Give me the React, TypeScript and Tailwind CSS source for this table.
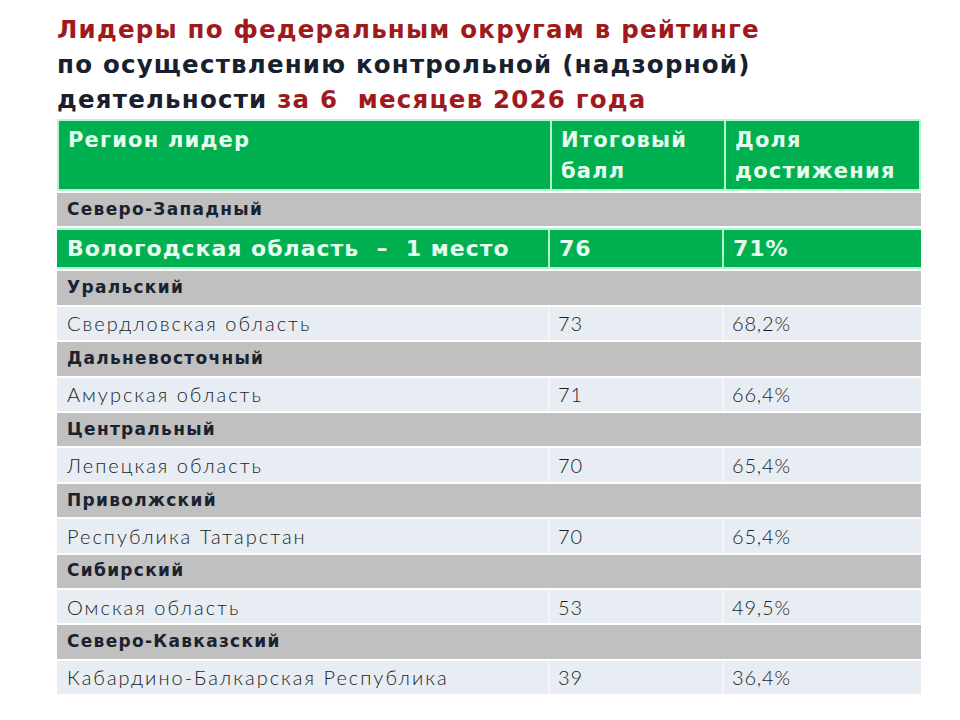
const districts = [
  { district: 'Уральский', region: 'Свердловская область', score: '73', share: '68,2%' },
  { district: 'Дальневосточный', region: 'Амурская область', score: '71', share: '66,4%' },
  { district: 'Центральный', region: 'Лепецкая область', score: '70', share: '65,4%' },
  { district: 'Приволжский', region: 'Республика Татарстан', score: '70', share: '65,4%' },
  { district: 'Сибирский', region: 'Омская область', score: '53', share: '49,5%' },
  { district: 'Северо-Кавказский', region: 'Кабардино-Балкарская Республика', score: '39', share: '36,4%' },
];

const heading = "font-['DejaVu_Sans',sans-serif]";
const bold = "font-['DejaVu_Sans',sans-serif] font-bold";
const light = "font-['Lato','Liberation_Sans',sans-serif] font-light";

function DistrictRow({ name }: { name: string }) {
  return (
    <div className="flex h-[33.4px] items-center bg-[#c0c0c0] pl-[10px]">
      <span className={`${bold} text-[17px] tracking-[1.3px] text-[#1a2230]`}>{name}</span>
    </div>
  );
}

function RegionRow({ region, score, share }: { region: string; score: string; share: string }) {
  return (
    <div className="grid h-[33.4px] grid-cols-[491px_174px_199px] bg-[#e8ecf3] text-[20px] text-[#1c1f24]">
      <div className={`${light} flex items-center pl-[10px] tracking-[2px]`}>{region}</div>
      <div className={`${light} flex items-center border-l-2 border-[#f3f5f9] pl-[8px] tracking-[0.8px]`}>{score}</div>
      <div className={`${light} flex items-center border-l-2 border-[#f3f5f9] pl-[8px] tracking-[0.8px]`}>{share}</div>
    </div>
  );
}

export default function App() {
  return (
    <div className="h-[720px] w-[960px] bg-white pl-[57px] pt-[12px]">
      <div className={`${heading} font-bold text-[24.5px] leading-[35px] tracking-[1.2px]`}>
        <div className="text-[#a01a1c]">Лидеры по федеральным округам в рейтинге</div>
        <div className="text-[#18202e]">по осуществлению контрольной (надзорной)</div>
        <div className="text-[#18202e]">
          деятельности <span className="text-[#a01a1c]">за 6&nbsp; месяцев 2026 года</span>
        </div>
      </div>

      <div className="mt-[2px] flex w-[864px] flex-col gap-[2px] bg-white">
        {/* Header */}
        <div className="grid h-[72px] grid-cols-[491px_174px_199px] border-2 border-[#b8f3d2] bg-[#00b050] text-[21px] leading-[31px] tracking-[1.2px] text-[#e6fcee]">
          <div className={`${bold} pl-[9px] pt-[4px]`}>Регион лидер</div>
          <div className={`${bold} border-l-2 border-[#b8f3d2] pl-[9px] pt-[4px]`}>
            Итоговый
            <br />
            балл
          </div>
          <div className={`${bold} border-l-2 border-[#b8f3d2] pl-[9px] pt-[4px]`}>
            Доля
            <br />
            достижения
          </div>
        </div>

        <DistrictRow name="Северо-Западный" />

        {/* Leader row */}
        <div className="grid h-[41px] grid-cols-[491px_174px_199px] border-y-2 border-[#b8f3d2] bg-[#00b050] text-[22px] tracking-[1px] text-[#e6fcee]">
          <div className={`${bold} flex items-center pl-[10px]`}>Вологодская область &nbsp;–&nbsp; 1 место</div>
          <div className={`${bold} flex items-center border-l-2 border-[#b8f3d2] pl-[9px]`}>76</div>
          <div className={`${bold} flex items-center border-l-2 border-[#b8f3d2] pl-[9px]`}>71%</div>
        </div>

        {districts.map((d) => (
          <div key={d.district} className="contents">
            <DistrictRow name={d.district} />
            <RegionRow region={d.region} score={d.score} share={d.share} />
          </div>
        ))}
      </div>
    </div>
  );
}
